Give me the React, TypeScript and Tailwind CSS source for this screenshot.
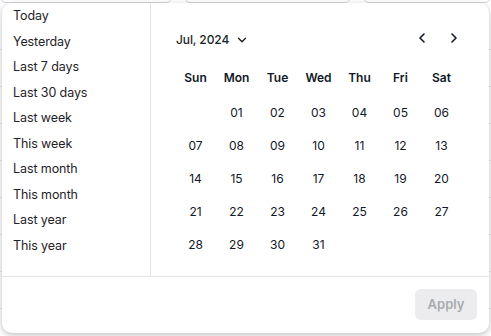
import { ChevronDown, ChevronLeft, ChevronRight } from "lucide-react";

// ─── Data ─────────────────────────────────────────────────────────────────────

const PRESETS = [
    "Today",
    "Yesterday",
    "Last 7 days",
    "Last 30 days",
    "Last week",
    "This week",
    "Last month",
    "This month",
    "Last year",
    "This year",
];

const WEEKDAYS = ["Sun", "Mon", "Tue", "Wed", "Thu", "Fri", "Sat"];

// July 2024 starts on a Monday
const CELLS: (number | null)[] = [null, ...Array.from({ length: 31 }, (_, i) => i + 1)];

const pad = (n: number) => String(n).padStart(2, "0");

// ─── Backdrop (page behind the popover) ──────────────────────────────────────

function Backdrop() {
    return (
        <div className="absolute inset-0 bg-white">
            <div className="flex gap-3 -mt-[20px] px-0">
                <div className="h-[23px] w-[175px] rounded-md border border-gray-300" />
                <div className="h-[23px] w-[170px] rounded-md border border-gray-300" />
                <div className="h-[23px] w-[130px] rounded-md border border-gray-300" />
            </div>
            <div className="mt-[10px] flex flex-col">
                {Array.from({ length: 10 }).map((_, i) => (
                    <div key={i} className="h-[37px] border-b border-gray-200" />
                ))}
            </div>
        </div>
    );
}

// ─── Calendar ─────────────────────────────────────────────────────────────────

function Calendar() {
    return (
        <div className="flex-1 pl-[25px] pr-[26px] pt-[27px]">
            <div className="flex items-center justify-between h-[20px]">
                <div className="flex items-center gap-[6px] text-[12px] font-medium tracking-[-0.1px] text-[#1b1f24]">
                    <span>Jul, 2024</span>
                    <ChevronDown size={14} strokeWidth={2.4} />
                </div>
                <div className="flex items-center gap-[16px] -mt-[4px] mr-[1px] text-[#111827]">
                    <ChevronLeft size={16} strokeWidth={2.4} />
                    <ChevronRight size={16} strokeWidth={2.4} />
                </div>
            </div>

            <div className="grid grid-cols-[repeat(7,41px)] -ml-[1px] mt-[18px]">
                {WEEKDAYS.map((d) => (
                    <div
                        key={d}
                        className="h-[20px] flex items-center justify-center text-[12px] font-semibold text-[#111827]"
                    >
                        {d}
                    </div>
                ))}
            </div>

            <div className="grid grid-cols-[repeat(7,41px)] -ml-[1px] mt-[8px]">
                {CELLS.map((c, i) => (
                    <div
                        key={i}
                        className="h-[33px] flex items-center justify-center text-[12px] text-[#111827]"
                    >
                        {c ? pad(c) : ""}
                    </div>
                ))}
            </div>
        </div>
    );
}

// ─── App ──────────────────────────────────────────────────────────────────────

export default function App() {
    return (
        <div className="relative w-[491px] h-[336px] overflow-hidden bg-white font-['Inter',sans-serif]">
            <Backdrop />

            {/* Popover */}
            <div className="absolute left-[2px] top-[3px] w-[487px] h-[330px] flex flex-col rounded-[10px] bg-white shadow-[0_2px_6px_rgba(0,0,0,0.25)]">
                <div className="flex h-[274px] border-b border-[#e2e2e2]">
                    <div className="w-[149px] border-r border-[#e2e2e2] flex flex-col pl-[11px] pt-[1px]">
                        {PRESETS.map((p) => (
                            <div
                                key={p}
                                className="h-[25.5px] flex items-center text-[12.5px] tracking-[-0.1px] text-[#1f2328]"
                            >
                                {p}
                            </div>
                        ))}
                    </div>
                    <Calendar />
                </div>

                <div className="flex-1 flex items-start justify-end pt-[12px] pr-[12px]">
                    <button className="h-[31px] w-[62px] rounded-md bg-[#ececee] text-[13px] font-semibold text-[#a9abb0]">
                        Apply
                    </button>
                </div>
            </div>
        </div>
    );
}
